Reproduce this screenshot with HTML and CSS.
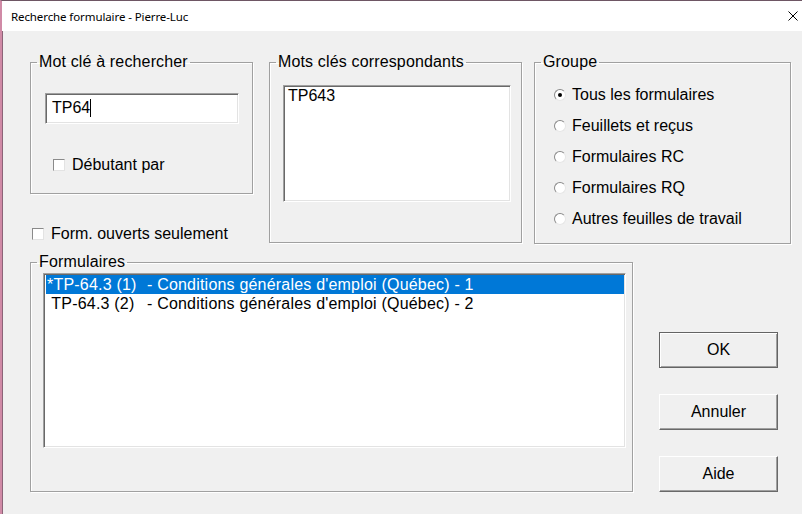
FILE: index.html
```html
<!DOCTYPE html>
<html lang="fr">
<head>
  <meta charset="UTF-8">
  <title>Recherche formulaire - Pierre-Luc</title>
  <link rel="stylesheet" href="styles.css">
</head>
<body>

<div class="window">
  <div class="titlebar">
    <span class="title">Recherche formulaire - Pierre-Luc</span>
    <svg class="close" width="10" height="10" viewBox="0 0 10 10">
      <path d="M0.5 0.5 L9.5 9.5 M9.5 0.5 L0.5 9.5" stroke="#000" stroke-width="1" fill="none"/>
    </svg>
  </div>

  <div class="client">
    <div class="top-row">
      <div class="left-col">
        <fieldset class="group group-keyword">
          <legend>Mot clé à rechercher</legend>
          <div class="textbox">TP64<span class="caret"></span></div>
          <label class="check check-begin"><span class="box"></span>Débutant par</label>
        </fieldset>
        <label class="check check-open"><span class="box"></span>Form. ouverts seulement</label>
      </div>

      <fieldset class="group group-matches">
        <legend>Mots clés correspondants</legend>
        <div class="listbox matches">
          <div class="item">TP643</div>
        </div>
      </fieldset>

      <fieldset class="group group-type">
        <legend>Groupe</legend>
        <div class="radios">
          <label class="radio"><span class="dot on"></span>Tous les formulaires</label>
          <label class="radio"><span class="dot"></span>Feuillets et reçus</label>
          <label class="radio"><span class="dot"></span>Formulaires RC</label>
          <label class="radio"><span class="dot"></span>Formulaires RQ</label>
          <label class="radio"><span class="dot"></span>Autres feuilles de travail</label>
        </div>
      </fieldset>
    </div>

    <div class="bottom-row">
      <fieldset class="group group-forms">
        <legend>Formulaires</legend>
        <div class="listbox forms">
          <div class="item selected"><span class="code">*TP-64.3 (1)</span>- Conditions générales d'emploi (Québec) - 1</div>
          <div class="item"><span class="code"> TP-64.3 (2)</span>- Conditions générales d'emploi (Québec) - 2</div>
        </div>
      </fieldset>

      <div class="buttons">
        <button class="btn default">OK</button>
        <button class="btn">Annuler</button>
        <button class="btn">Aide</button>
      </div>
    </div>
  </div>
</div>

</body>
</html>
```

FILE: styles.css
```css
html, body {
  margin: 0;
  padding: 0;
}

body {
  width: 802px;
  height: 514px;
  overflow: hidden;
  background-color: #f0f0f0;
  font-family: "Liberation Sans", Arial, sans-serif;
  font-size: 16px;
  color: #000;
}

.window {
  height: 514px;
  border-top: 1px solid #6e5664;
  border-left: 2px solid #d08aa6;
  box-shadow: inset 1px 0 0 #8c6478;
  box-sizing: border-box;
}

/* title bar */
.titlebar {
  height: 30px;
  background-color: #fff;
  display: flex;
  align-items: center;
  justify-content: space-between;
  padding: 0 4px 0 9px;
}

.title {
  font-family: "Noto Sans", sans-serif;
  font-size: 11.5px;
  letter-spacing: -0.1px;
  color: #000;
}

.close {
  display: block;
}

/* dialog area */
.client {
  padding: 22px 0 0 28px;
}

.top-row {
  display: flex;
  align-items: flex-start;
  height: 200px;
}

.left-col {
  width: 223px;
  margin-right: 16px;
}

.group {
  margin: 0;
  padding: 0;
  border: 1px solid #a0a0a0;
  box-shadow: 1px 1px 0 #fff, inset 1px 1px 0 #fff;
  box-sizing: border-box;
}

.group legend {
  margin-left: 6px;
  padding: 0 2px;
  font-size: 16px;
  line-height: 18px;
  letter-spacing: 0.15px;
}

.group-keyword {
  width: 223px;
  height: 141px;
}

.group-matches {
  width: 253px;
  height: 190px;
  margin-right: 12px;
}

.group-type {
  width: 257px;
  height: 191px;
}

/* sunken controls */
.textbox, .listbox {
  background-color: #fff;
  border: 1px solid;
  border-color: #a0a0a0 #fff #fff #a0a0a0;
  box-shadow: inset 1px 1px 0 #696969, inset -1px -1px 0 #e3e3e3;
  box-sizing: border-box;
}

.textbox {
  width: 194px;
  height: 31px;
  margin: 22px 0 0 14px;
  padding: 4px 0 0 6px;
  line-height: 20px;
}

.caret {
  display: inline-block;
  width: 1px;
  height: 18px;
  background-color: #000;
  vertical-align: -4px;
}

.check {
  display: flex;
  align-items: center;
  line-height: 18px;
}

.check .box {
  width: 12px;
  height: 12px;
  margin-right: 7px;
  background-color: #fff;
  border: 1px solid;
  border-color: #8a8a8a #e3e3e3 #e3e3e3 #8a8a8a;
  box-sizing: border-box;
}

.check-begin {
  margin: 32px 0 0 22px;
}

.check-open {
  margin: 31px 0 0 2px;
}

.listbox .item {
  white-space: pre;
  line-height: 18px;
  padding-left: 3px;
}

.matches {
  width: 228px;
  height: 117px;
  margin: 14px 0 0 13px;
  padding: 1px 0 0 1px;
}

.radios {
  padding: 8px 0 0 19px;
}

.radio {
  display: flex;
  align-items: center;
  height: 31px;
}

.dot {
  width: 12px;
  height: 12px;
  margin-right: 6px;
  border-radius: 50%;
  background-color: #fff;
  border: 1px solid;
  border-color: #8a8a8a #e6e6e6 #e6e6e6 #8a8a8a;
  box-sizing: border-box;
  display: flex;
  align-items: center;
  justify-content: center;
}

.dot.on::after {
  content: "";
  width: 4px;
  height: 4px;
  border-radius: 50%;
  background-color: #000;
}

/* bottom part */
.bottom-row {
  display: flex;
  align-items: flex-start;
}

.group-forms {
  width: 603px;
  height: 239px;
  margin-right: 26px;
}

.forms {
  width: 583px;
  height: 175px;
  margin: 2px 0 0 12px;
  padding: 1px 1px 0 2px;
}

.forms .item {
  padding-left: 1px;
  height: 19px;
  line-height: 20px;
  letter-spacing: 0.2px;
}

.forms .code {
  display: inline-block;
  width: 100px;
}

.forms .item.selected {
  background-color: #0078d7;
  color: #fff;
}

.buttons {
  display: flex;
  flex-direction: column;
  gap: 26px;
  padding-top: 79px;
}

.btn {
  width: 119px;
  height: 36px;
  padding: 0;
  font-family: "Liberation Sans", Arial, sans-serif;
  font-size: 16px;
  color: #000;
  background-color: #f0f0f0;
  border: 1px solid;
  border-color: #fff #696969 #696969 #fff;
  box-shadow: inset -1px -1px 0 #a0a0a0;
  cursor: pointer;
}

.btn.default {
  border-color: #646464;
  box-shadow: inset 1px 1px 0 #fff, inset -1px -1px 0 #a0a0a0;
}
```
